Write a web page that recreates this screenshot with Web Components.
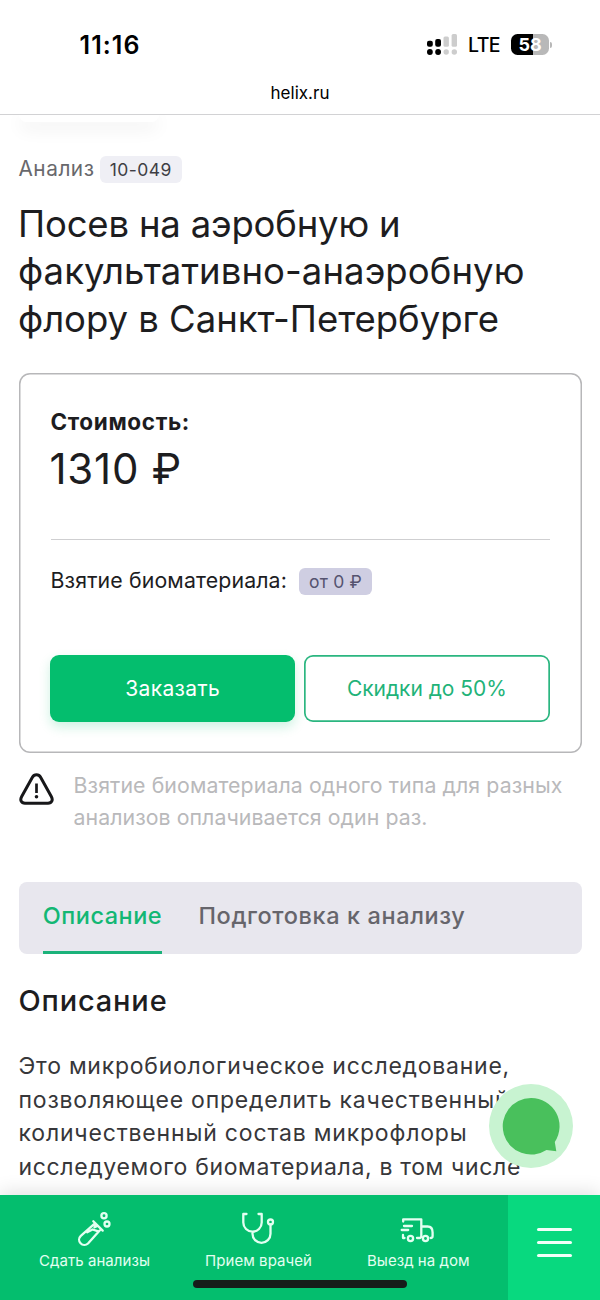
<!DOCTYPE html>
<html lang="ru">
<head>
<meta charset="utf-8">
<title>helix.ru</title>
<style>
body{margin:0;background:#fff;font-family:Inter,"Liberation Sans",sans-serif;color:#1d1d1f}
</style>
</head>
<body>
<hx-page></hx-page>
<script>
const define=(name,html,Base=HTMLElement)=>customElements.define(name,class extends Base{
  constructor(){super();this.attachShadow({mode:'open'}).innerHTML=html;}
});

/* One line of text tracked to a measure: <hx-line w="120">text</hx-line> */
customElements.define('hx-line',class extends HTMLElement{
  constructor(){
    super();
    this.attachShadow({mode:'open'}).innerHTML='<style>:host{display:block;white-space:nowrap}span{display:inline-block}</style><span><slot></slot></span>';
  }
  connectedCallback(){
    const fit=()=>{
      const s=this.shadowRoot.querySelector('span'),w=+this.getAttribute('w'),n=this.textContent.length;
      s.style.letterSpacing='0px';
      const natural=s.getBoundingClientRect().width;
      if(w&&n&&natural)s.style.letterSpacing=((w-natural)/n).toFixed(3)+'px';
      if(w)this.style.width=w+'px';
    };
    requestAnimationFrame(fit);fit();
  }
});

define('hx-signal',`<style>:host{display:block}svg{display:block}</style>
<svg width="31" height="21" viewBox="0 0 31 21"><g fill="#000"><rect x="0" y="6.700" width="5.800" height="6" rx="2"/><rect x="8.200" y="5" width="5.800" height="7.700" rx="2"/><circle cx="2.900" cy="18" r="2.900"/><circle cx="11.100" cy="18" r="2.900"/></g><g fill="#cdcdcd"><rect x="16.500" y="2.500" width="5.400" height="10.300" rx="1.500"/><rect x="24.600" y="0" width="5.400" height="12.800" rx="1.500"/><circle cx="19.200" cy="18" r="2.700"/><circle cx="27.300" cy="18" r="2.700"/></g></svg>`);

define('hx-battery',`<style>:host{display:flex;align-items:center;gap:1px}
div{width:38.5px;height:21px;border-radius:6.5px;background:linear-gradient(90deg,#000 57%,#b8b8b8 57%);color:#fff;font-weight:700;font-size:18px;line-height:21px;display:flex;justify-content:center}
i{width:2px;height:6px;border-radius:0 2px 2px 0;background:#b8b8b8}</style>
<div><hx-line w="22.500"><slot></slot></hx-line></div><i></i>`);

define('hx-status',`<style>:host{display:block;height:114px;background:#fff;border-bottom:1px solid #d2d2d4;position:relative;z-index:1;color:#000}
.top{display:flex;align-items:center;height:69px;padding:20px 48px 0 79.500px;box-sizing:border-box}
.time{font-size:25px;font-weight:600;flex:1}.lte{font-size:19.500px;margin:1px 10.500px 0 10.500px;font-weight:500}
.url{font-size:17px;line-height:22px;padding:12.500px 0 0 270.500px}</style>
<div class="top"><div class="time"><hx-line w="61">11:16</hx-line></div><hx-signal></hx-signal><hx-line class="lte" w="32">LTE</hx-line><hx-battery>58</hx-battery></div>
<div class="url"><hx-line w="59">helix.ru</hx-line></div>`);

define('hx-badge',`<style>:host{display:flex;justify-content:center;height:27px;border-radius:6px;background:var(--badge-bg,#efeff5);color:var(--badge-fg,#3e3e44);font-size:17.5px;line-height:27px}</style><slot></slot>`);

define('hx-button',`<style>:host{display:flex;align-items:center;justify-content:center;box-sizing:border-box;height:67px;border-radius:9px;font-size:21px;color:#fff;background:#04be6e;box-shadow:0 5px 12px rgba(4,190,110,.2)}
:host([outline]){background:#fff;color:#1fb379;box-shadow:inset 0 0 0 1.700px #2bb680}</style><slot></slot>`);

define('hx-price-card',`<style>:host{display:block;box-sizing:border-box;height:380.5px;box-shadow:inset 0 0 0 1.5px #b7b7b9;border-radius:11px;padding:35.500px 32px 0}
.cap{font-size:22.500px;font-weight:700;line-height:28px}.price{font-size:42px;line-height:50px;margin-top:8px;margin-left:-1px}
hr{border:0;height:1px;background:#cfcfd1;margin:45px 0 28px}
.take{display:flex;gap:12px;height:27px;font-size:21.300px;line-height:25px}
hx-badge{width:73px;--badge-bg:#cfcee2;--badge-fg:#55536f}
.btns{display:grid;grid-template-columns:1fr 1fr;gap:9px;margin:60px 0 0 -.5px}</style>
<hx-line class="cap" w="139.500">Стоимость:</hx-line>
<hx-line class="price" w="132.500">1310 ₽</hx-line>
<hr>
<div class="take"><hx-line w="236.500">Взятие биоматериала:</hx-line><hx-badge><hx-line w="53">от 0 ₽</hx-line></hx-badge></div>
<div class="btns"><hx-button><hx-line w="95">Заказать</hx-line></hx-button><hx-button outline><hx-line w="160">Скидки до 50%</hx-line></hx-button></div>`);

define('hx-note',`<style>:host{display:flex;gap:19.500px;padding:15.500px 0 0 .5px;color:#b9b9bb;font-size:21.300px;line-height:32px;height:76.500px}svg{margin-top:4px;flex:none}</style>
<svg width="35" height="33" viewBox="0 0 35 33" fill="none" stroke="#171719" stroke-width="3" stroke-linecap="round" stroke-linejoin="round"><path d="M13.4 4.2 2.7 23.5C.7 27.1 2.2 30.2 6 30.2H29c3.800 0 5.300-3.100 3.300-6.700L21.600 4.200C19.800 1 15.200 1 13.400 4.200Z"/><path d="M17.500 10.500v9.500" stroke-linecap="butt" stroke-width="2.700"/><circle cx="17.500" cy="23.800" r="1.800" fill="#171719" stroke="none"/></svg>
<div><hx-line w="489">Взятие биоматериала одного типа для разных</hx-line><hx-line w="354">анализов оплачивается один раз.</hx-line></div>`);

define('hx-tabs',`<style>:host{display:flex;box-sizing:border-box;height:71.500px;border-radius:8px;background:#e8e7ee;padding-left:24.200px;gap:36.300px;font-size:23.500px;font-weight:500;line-height:68.500px;color:#66656b}
.on{color:#13b774;border-bottom:3px solid #1bb27a}</style>
<hx-line class="on" w="119.500">Описание</hx-line><hx-line w="267">Подготовка к анализу</hx-line>`);

define('hx-chat',`<style>:host{position:absolute;left:489px;top:1084px;display:block}svg{display:block}</style>
<svg width="84" height="84" viewBox="0 0 84 84"><circle cx="42" cy="42" r="42" fill="#c8f3d1"/><path d="M42 14a28.300 28.300 0 1 0 15.500 52L67.300 67.300 65.800 58A28.300 28.300 0 0 0 42 14Z" fill="#49c05c"/></svg>`);

define('hx-nav-item',`<style>:host{display:flex;flex-direction:column;align-items:center;font-size:15px;line-height:20px;color:#e3fff1}
::slotted(svg){display:block;width:36px;height:36px;margin:16px 0 4.500px;fill:none;stroke:#e3fff1;stroke-width:2.300;stroke-linecap:round;stroke-linejoin:round}</style>
<slot name="icon"></slot><slot></slot>`);

define('hx-nav',`<style>:host{display:flex;height:105.500px;background:#04be6e;box-shadow:0 -3px 18px rgba(0,0,0,.12);position:relative}
.items{display:flex;flex:1;padding-left:39px;gap:55px}
.menu{width:92px;background:#08d97f;display:flex;flex-direction:column;gap:10px;padding:33px 0 0 29px;box-sizing:border-box}
.menu i{display:block;width:35px;height:3px;border-radius:2px;background:#f2fff9}
.home{position:absolute;left:193px;top:85.500px;width:214px;height:8px;border-radius:4px;background:#161d1a}</style>
<div class="items">
<hx-nav-item><svg slot="icon" viewBox="0 0 36 36"><path d="m16.300 10.200 9.400 9.400M18.200 12.200 3.800 24.800a5.200 5.200 0 0 0 7.200 7.700L24 18M10.200 21.200l5.300-2.700 5.200 1.700M18.700 12.500l-1.200 3.800 3-1.300"/><circle cx="27" cy="4.700" r="2.600"/><circle cx="30" cy="13" r="2.500"/></svg><hx-line w="111">Сдать анализы</hx-line></hx-nav-item>
<hx-nav-item><svg slot="icon" viewBox="0 0 36 36"><path d="M5.500 3H2.300v8.500a9.200 9.200 0 0 0 18.400 0V3H17.500M11.500 20.800v2a9 9 0 0 0 18 0V13.500"/><circle cx="29.500" cy="11" r="2.500"/></svg><hx-line w="107">Прием врачей</hx-line></hx-nav-item>
<hx-nav-item><svg slot="icon" viewBox="0 0 36 36"><path d="M3.200 10.500V8.300H21.300V24.500a2 2 0 0 1-2 2.500H17M21.300 15.500h6.300q5 0 5 6v3.500q0 2-2 2M4 15h8M1.700 19h6.500M3 24v3h1.500"/><circle cx="10.500" cy="27.500" r="2.600"/><circle cx="25.500" cy="27.500" r="2.600"/></svg><hx-line w="102.500">Выезд на дом</hx-line></hx-nav-item>
</div><div class="menu"><i></i><i></i><i></i></div><div class="home"></div>`);

define('hx-page',`<style>:host{display:flex;flex-direction:column;width:600px;height:1300px;position:relative;overflow:hidden;background:#fff}
main{flex:1;min-height:0;padding:0 18.500px}
.pill{width:140px;height:7px;border-radius:0 0 9px 9px;background:#fff;box-shadow:0 6px 18px rgba(0,0,0,.09)}
.code{display:flex;gap:5px;margin-top:33.500px;height:27px;font-size:20.800px;line-height:25px;color:#68686c}
.code hx-badge{width:82.500px}
h1{font-size:36.500px;font-weight:400;line-height:47.300px;margin:18.500px 0 29.800px -.5px}
h2{font-size:29px;font-weight:500;line-height:36px;margin:29px 0 31.500px}
.text{font-size:23px;line-height:33.600px;color:#37373a}
hx-tabs{margin-top:37px}</style>
<hx-status></hx-status>
<main>
<div class="pill"></div>
<div class="code"><hx-line w="76">Анализ</hx-line><hx-badge><hx-line w="62">10-049</hx-line></hx-badge></div>
<h1><hx-line w="382.500">Посев на аэробную и</hx-line><hx-line w="506.500">факультативно-анаэробную</hx-line><hx-line w="481">флору в Санкт-Петербурге</hx-line></h1>
<hx-price-card></hx-price-card>
<hx-note></hx-note>
<hx-tabs></hx-tabs>
<h2><hx-line w="149">Описание</hx-line></h2>
<div class="text"><hx-line w="491.500">Это микробиологическое исследование,</hx-line><hx-line w="491">позволяющее определить качественный</hx-line><hx-line w="449">количественный состав микрофлоры</hx-line><hx-line w="502.500">исследуемого биоматериала, в том числе</hx-line></div>
</main>
<hx-nav></hx-nav>
<hx-chat></hx-chat>`);
</script>
</body>
</html>
